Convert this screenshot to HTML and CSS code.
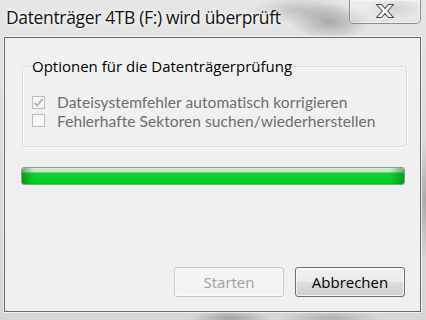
FILE: index.html
```html
<!DOCTYPE html>
<html lang="de">
<head>
<meta charset="utf-8">
<title>Datenträger 4TB (F:) wird überprüft</title>
<link rel="stylesheet" href="styles.css">
</head>
<body>
<div class="window">
  <div class="titlebar">
    <span class="title">Datenträger 4TB (F:) wird überprüft</span>
    <button class="close" aria-label="Schließen">
      <svg width="22" height="16" viewBox="0 0 22 16">
        <path d="M2.5 1.5 H7.5 L11 5.5 L14.5 1.5 H19.5 L13.6 8 L19.5 14.5 H14.5 L11 10.5 L7.5 14.5 H2.5 L8.4 8 Z" fill="#fbfbfb" stroke="#4a4a4a" stroke-width="1.1" stroke-linejoin="round"/>
      </svg>
    </button>
  </div>
  <div class="client">
    <fieldset class="group">
      <legend>Optionen für die Datenträgerprüfung</legend>
      <label class="check disabled">
        <span class="box checked">
          <svg width="11" height="11" viewBox="0 0 11 11"><path d="M1.5 5.8 L4.2 8.6 L9.6 1.8" fill="none" stroke="#b4b4b4" stroke-width="2"/></svg>
        </span>
        <span>Dateisystemfehler automatisch korrigieren</span>
      </label>
      <label class="check disabled">
        <span class="box"></span>
        <span>Fehlerhafte Sektoren suchen/wiederherstellen</span>
      </label>
    </fieldset>
    <div class="progress"><div class="fill" style="width:100%"></div></div>
    <div class="buttons">
      <button class="btn" disabled>Starten</button>
      <button class="btn default">Abbrechen</button>
    </div>
  </div>
</div>
</body>
</html>
```
FILE: styles.css
```css
html, body {
  margin: 0;
  padding: 0;
}
body {
  width: 426px;
  height: 320px;
  overflow: hidden;
  font-family: "Open Sans", "Noto Sans", "Liberation Sans", sans-serif;
  background:
    radial-gradient(ellipse 40px 18px at 330px 22px, rgba(120,120,120,0.55), rgba(120,120,120,0) 100%),
    radial-gradient(ellipse 50px 14px at 300px 10px, rgba(150,150,150,0.45), rgba(150,150,150,0) 100%),
    radial-gradient(ellipse 30px 12px at 395px 8px, rgba(160,160,160,0.5), rgba(160,160,160,0) 100%),
    radial-gradient(ellipse 40px 8px at 230px 318px, rgba(110,110,110,0.5), rgba(110,110,110,0) 100%),
    radial-gradient(ellipse 50px 8px at 330px 318px, rgba(120,120,120,0.4), rgba(120,120,120,0) 100%),
    radial-gradient(ellipse 10px 60px at 425px 200px, rgba(120,120,120,0.5), rgba(120,120,120,0) 100%),
    linear-gradient(180deg, #e6e6e6 0%, #dcdcdc 40%, #d6d6d6 100%);
}
.window {
  width: 426px;
  height: 320px;
  display: flex;
  flex-direction: column;
}
.titlebar {
  height: 37px;
  display: flex;
  align-items: flex-start;
  justify-content: space-between;
  padding-left: 6px;
  padding-right: 5px;
  box-sizing: border-box;
}
.title {
  font-size: 17.5px;
  letter-spacing: -0.35px;
  color: #111;
  line-height: 20px;
  margin-top: 7px;
  text-shadow: 0 0 6px rgba(255,255,255,0.9), 0 0 3px rgba(255,255,255,0.9);
}
.close {
  width: 72px;
  height: 24px;
  margin: 0;
  padding: 0;
  border: 1px solid rgba(110,110,110,0.75);
  border-top: none;
  border-radius: 0 0 5px 5px;
  background: linear-gradient(180deg, rgba(255,255,255,0.35), rgba(230,230,230,0.3));
  box-shadow: inset 0 0 0 1px rgba(255,255,255,0.45);
  display: flex;
  align-items: center;
  justify-content: center;
}
.close svg { display: block; margin-top: -1px; }
.client {
  margin-left: 4px;
  width: 417px;
  height: 275px;
  box-sizing: border-box;
  background: #f0f0f0;
  border: 1px solid #6a6a6a;
  box-shadow: 0 0 0 1px rgba(255,255,255,0.6);
  padding: 18px 15px 14px 16px;
  display: flex;
  flex-direction: column;
}
.group {
  margin: 0 0 0 1px;
  padding: 17px 9px 0 9px;
  width: 385px;
  height: 91px;
  box-sizing: border-box;
  border: 1px solid #dcdcdc;
  border-radius: 3px;
  box-shadow: inset 1px 1px 0 #fbfbfb, 1px 1px 0 #fbfbfb;
  display: flex;
  flex-direction: column;
  gap: 0;
}
.group legend {
  padding: 0 1px;
  margin-left: -1px;
  font-size: 15px;
  line-height: 20px;
  color: #000;
}
.check {
  display: flex;
  align-items: center;
  gap: 12px;
  font-family: "Lato", "Open Sans", sans-serif;
  font-size: 15.5px;
  letter-spacing: 0.07px;
  line-height: 18.6px;
  height: 18.6px;
  color: #6d6d6d;
}
.box {
  width: 11px;
  height: 11px;
  border: 1px solid #bcbcbc;
  background: linear-gradient(135deg, #f4f4f4, #fcfcfc);
  box-shadow: inset 0 0 0 1px #f7f7f7;
  display: flex;
  align-items: center;
  justify-content: center;
  flex: none;
}
.box svg { display: block; }
.progress {
  margin-top: 20px;
  width: 384px;
  height: 18px;
  box-sizing: border-box;
  border: 1px solid #8c9a8c;
  border-radius: 3px;
  background: #e6e6e6;
  overflow: hidden;
}
.fill {
  height: 100%;
  background:
    linear-gradient(90deg, rgba(0,90,20,0.45) 0px, rgba(0,90,20,0) 12px, rgba(0,90,20,0) calc(100% - 14px), rgba(0,90,20,0.45) 100%),
    linear-gradient(180deg, #cdf2cd 0px, #b2eeb4 4px, #11d42e 5px, #06d42a 9px, #03cc26 13px, #04c425 100%);
}
.buttons {
  margin-top: auto;
  display: flex;
  justify-content: flex-end;
  gap: 11px;
}
.btn {
  width: 110px;
  height: 30px;
  border-radius: 3px;
  font-family: inherit;
  font-size: 15px;
  padding: 0;
  border: 1px solid #707070;
  color: #000;
  background: linear-gradient(180deg, #f2f2f2 0%, #ebebeb 48%, #dddddd 52%, #cfcfcf 100%);
  box-shadow: inset 0 0 0 1px rgba(255,255,255,0.7);
}
.btn:disabled {
  color: #a0a0a0;
  border-color: #c8c8c8;
  background: #f4f4f4;
  box-shadow: inset 0 0 0 1px #fbfbfb;
}
```
